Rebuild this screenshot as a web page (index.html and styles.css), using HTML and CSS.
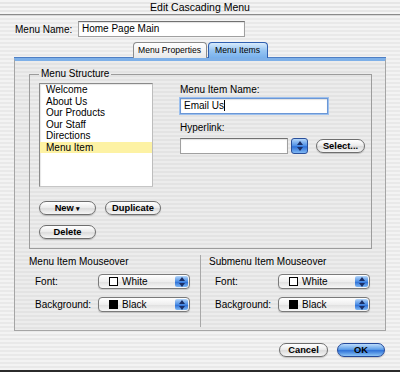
FILE: index.html
```html
<!DOCTYPE html>
<html>
<head>
  <meta charset="utf-8">
  <title>Edit Cascading Menu</title>
  <link rel="stylesheet" href="styles.css">
</head>
<body>
  <div class="window">
    <div class="titlebar">Edit Cascading Menu</div>

    <div class="name-row">
      <span class="name-label">Menu Name:</span>
      <div class="field name-field">Home Page Main</div>
    </div>

    <div class="tabs">
      <span class="tab tab-props">Menu Properties</span>
      <span class="tab tab-items active">Menu Items</span>
    </div>

    <div class="pane">
      <fieldset class="structure">
        <legend>Menu Structure</legend>
        <div class="structure-body">
          <div class="list-col">
            <ul class="item-list">
              <li>Welcome</li>
              <li>About Us</li>
              <li>Our Products</li>
              <li>Our Staff</li>
              <li>Directions</li>
              <li class="selected">Menu Item</li>
            </ul>
            <div class="btn-row">
              <span class="btn btn-wide">New <span class="caret-down">&#9662;</span></span>
              <span class="btn btn-dup">Duplicate</span>
            </div>
            <div class="btn-row">
              <span class="btn btn-wide">Delete</span>
            </div>
          </div>

          <div class="detail-col">
            <div class="detail-label">Menu Item Name:</div>
            <div class="field item-field focus">Email Us<span class="text-caret"></span></div>
            <div class="detail-label link-label">Hyperlink:</div>
            <div class="link-row">
              <div class="field link-field"></div>
              <span class="stepper">
                <svg width="6" height="10" viewBox="0 0 6 10"><path d="M0 4 L3 0 L6 4 Z M0 6 L3 10 L6 6 Z"/></svg>
              </span>
              <span class="btn btn-select">Select...</span>
            </div>
          </div>
        </div>
      </fieldset>

      <div class="mouseover">
        <div class="mo-col">
          <div class="mo-title">Menu Item Mouseover</div>
          <div class="mo-row">
            <span class="mo-label">Font:</span>
            <div class="popup"><span class="swatch white"></span>White<span class="popup-cap"><svg width="6" height="10" viewBox="0 0 6 10"><path d="M0 4 L3 0 L6 4 Z M0 6 L3 10 L6 6 Z"/></svg></span></div>
          </div>
          <div class="mo-row">
            <span class="mo-label">Background:</span>
            <div class="popup"><span class="swatch black"></span>Black<span class="popup-cap"><svg width="6" height="10" viewBox="0 0 6 10"><path d="M0 4 L3 0 L6 4 Z M0 6 L3 10 L6 6 Z"/></svg></span></div>
          </div>
        </div>
        <div class="mo-col mo-right">
          <div class="mo-title">Submenu Item Mouseover</div>
          <div class="mo-row">
            <span class="mo-label">Font:</span>
            <div class="popup"><span class="swatch white"></span>White<span class="popup-cap"><svg width="6" height="10" viewBox="0 0 6 10"><path d="M0 4 L3 0 L6 4 Z M0 6 L3 10 L6 6 Z"/></svg></span></div>
          </div>
          <div class="mo-row">
            <span class="mo-label">Background:</span>
            <div class="popup"><span class="swatch black"></span>Black<span class="popup-cap"><svg width="6" height="10" viewBox="0 0 6 10"><path d="M0 4 L3 0 L6 4 Z M0 6 L3 10 L6 6 Z"/></svg></span></div>
          </div>
        </div>
      </div>
    </div>

    <div class="footer">
      <span class="btn btn-cancel">Cancel</span>
      <span class="btn btn-ok">OK</span>
    </div>
  </div>
</body>
</html>
```

FILE: styles.css
```css
* {
  box-sizing: border-box;
}
body {
  margin: 0;
  font-family: "Liberation Sans", Arial, sans-serif;
  font-size: 10px;
  color: #000;
  background: #222;
}
.window {
  width: 400px;
  height: 372px;
  overflow: hidden;
  background: repeating-linear-gradient(#f3f3f3 0 2px, #e9e9e9 2px 4px);
  border-bottom: 2px solid #2b2b2b;
}
.titlebar {
  height: 15px;
  line-height: 14px;
  text-align: center;
  font-size: 10.5px;
  color: #000;
  background: repeating-linear-gradient(#f4f4f4 0 2px, #e6e6e6 2px 4px);
  border-bottom: 1px solid #8a8a8a;
  box-shadow: 0 1px 0 #d8d8d8;
}

/* name row */
.name-row {
  display: flex;
  align-items: center;
  padding: 6px 0 0 15px;
  white-space: nowrap;
}
.name-label {
  flex-shrink: 0;
  width: 63px;
}
.field {
  flex-shrink: 0;
  height: 16px;
  line-height: 14px;
  padding-left: 3px;
  background: #fff;
  border: 1px solid #a0a0a0;
  border-top-color: #707070;
  box-shadow: inset 0 1px 1px rgba(0,0,0,0.12);
  white-space: nowrap;
}
.name-field {
  width: 167px;
}

/* tabs */
.tabs {
  display: flex;
  justify-content: center;
  gap: 1px;
  margin-top: 5px;
  height: 16px;
  white-space: nowrap;
}
.tab {
  height: 16px;
  line-height: 15px;
  text-align: center;
  font-size: 8.6px;
  color: #000;
  border: 1px solid #8c8c8c;
  border-bottom: none;
  border-radius: 4px 4px 0 0;
  background: linear-gradient(#ffffff, #e8e8e8);
}
.tab-props {
  width: 74px;
}
.tab-items {
  width: 60px;
}
.tab.active {
  border-color: #2f5fb0;
  background: linear-gradient(#d8ebfc, #97c5f2 50%, #78b0ec);
}

/* pane */
.pane {
  margin: 0 14px;
  height: 273px;
  padding: 7px 13px 0 14px;
  border: 1px solid #a5a5a5;
  border-top: 3px solid #7eb0e8;
  box-shadow: 0 -1px 0 #4f7fc4;
  background: repeating-linear-gradient(#ececec 0 2px, #e3e3e3 2px 4px);
}
.structure {
  margin: 0;
  padding: 3px 0 9px 9px;
  min-width: 0;
  border: 1px solid #9c9c9c;
}
.structure legend {
  padding: 0 2px;
  margin-left: 0;
  line-height: 12px;
}
.structure-body {
  display: flex;
  gap: 19px;
}
.item-list {
  list-style: none;
  margin: 0;
  padding: 0;
  width: 114px;
  height: 104px;
  background: #fff;
  border: 1px solid #8a8a8a;
  border-right-color: #bdbdbd;
  border-bottom-color: #c6c6c6;
  box-shadow: inset 1px 1px 1px rgba(0,0,0,0.1);
}
.item-list li {
  height: 11.5px;
  line-height: 11.5px;
  padding-left: 6px;
}
.item-list li.selected {
  background: #fdf2a4;
}
.btn-row {
  display: flex;
  gap: 9px;
  margin-top: 14px;
}
.btn-row + .btn-row {
  margin-top: 10px;
}

/* aqua push buttons */
.btn {
  display: inline-block;
  flex-shrink: 0;
  height: 14px;
  line-height: 12px;
  text-align: center;
  font-weight: bold;
  font-size: 9.3px;
  white-space: nowrap;
  color: #000;
  border: 1px solid #6e6e6e;
  border-radius: 8px;
  background: linear-gradient(#ffffff, #ececec 45%, #dcdcdc 55%, #f6f6f6);
  box-shadow: 0 1px 1px rgba(0,0,0,0.2);
}
.btn-wide {
  width: 57px;
}
.btn-dup {
  width: 56px;
}
.caret-down {
  font-size: 7px;
}
.btn-select {
  width: 49px;
  margin-left: 8px;
}
.btn-cancel {
  width: 49px;
}
.btn-ok {
  width: 48px;
  border-color: #23489a;
  background: linear-gradient(#bcdcfb, #5f9fe9 45%, #2f72d8 55%, #8cc4f6);
}

/* detail column */
.detail-label {
  line-height: 12px;
  margin-top: 1px;
}
.item-field {
  width: 148px;
  margin-top: 2px;
}
.field.focus {
  border-color: #6b97d6;
  box-shadow: 0 0 0 1px #9cc0ee, inset 0 1px 1px rgba(0,0,0,0.12);
}
.text-caret {
  display: inline-block;
  width: 1px;
  height: 11px;
  background: #000;
  vertical-align: -2px;
}
.link-label {
  margin-top: 8px;
}
.link-row {
  display: flex;
  align-items: center;
  margin-top: 4px;
}
.link-field {
  width: 108px;
}
.stepper {
  display: flex;
  align-items: center;
  justify-content: center;
  width: 17px;
  height: 16px;
  margin-left: 3px;
  border: 1px solid #2a4f9a;
  border-radius: 3px;
  background: linear-gradient(#b4d6fa, #4a8ce4 50%, #2d6fd6 55%, #7fb8f4);
}
.stepper svg path,
.popup-cap svg path {
  fill: #1b2f66;
}

/* mouseover settings */
.mouseover {
  display: flex;
  margin-top: 6px;
}
.mo-col {
  width: 171px;
  height: 72px;
}
.mo-right {
  width: 172px;
  padding-left: 8px;
  border-left: 1px solid #a8a8a8;
}
.mo-title {
  line-height: 13px;
}
.mo-row {
  display: flex;
  align-items: center;
  margin-top: 6px;
  padding-left: 6px;
  white-space: nowrap;
}
.mo-row + .mo-row {
  margin-top: 8px;
}
.mo-label {
  flex-shrink: 0;
  width: 63px;
}
.popup {
  display: flex;
  align-items: center;
  position: relative;
  flex-shrink: 0;
  width: 92px;
  height: 15px;
  padding-left: 10px;
  border: 1px solid #7a7a7a;
  border-radius: 4px;
  background: linear-gradient(#ffffff, #eeeeee 50%, #e0e0e0 55%, #f7f7f7);
  box-shadow: 0 1px 1px rgba(0,0,0,0.15);
}
.swatch {
  width: 9px;
  height: 9px;
  margin-right: 4px;
  border: 1px solid #000;
}
.swatch.white {
  background: #fff;
}
.swatch.black {
  background: #000;
}
.popup-cap {
  display: flex;
  align-items: center;
  justify-content: center;
  position: absolute;
  right: 1px;
  top: 1px;
  width: 13px;
  height: 11px;
  border-radius: 2px;
  background: linear-gradient(#b4d6fa, #4a8ce4 50%, #2d6fd6 55%, #7fb8f4);
}

/* footer */
.footer {
  display: flex;
  justify-content: flex-end;
  gap: 9px;
  padding: 12px 15px 0 0;
}
```
